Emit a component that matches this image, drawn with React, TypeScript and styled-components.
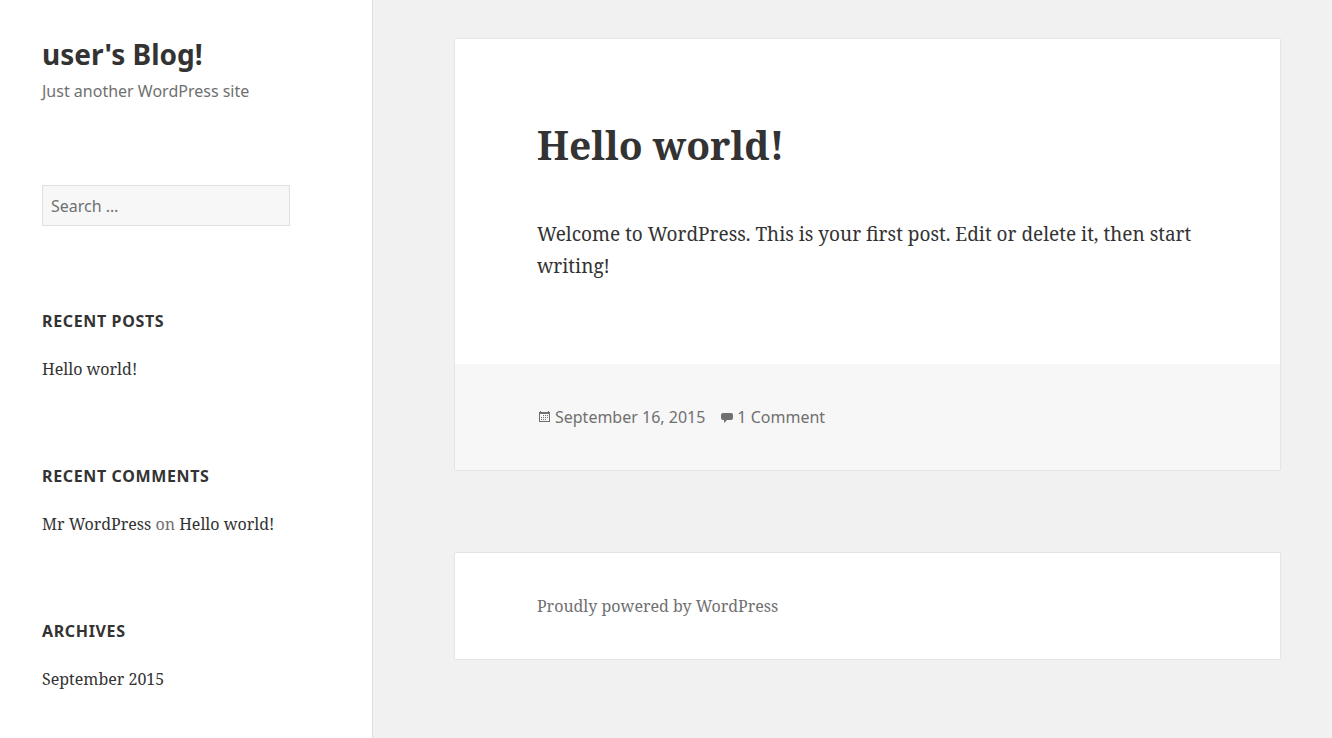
import React from 'react';
import styled, { createGlobalStyle } from 'styled-components';

const sans = '"Noto Sans", sans-serif';
const serif = '"Noto Serif", "Droid Serif", "DejaVu Serif Condensed", "DejaVu Serif", serif';

const GlobalStyle = createGlobalStyle`
  *, *::before, *::after { box-sizing: border-box; }
  body {
    margin: 0;
    background: #f1f1f1;
    color: #333;
    font: 16px/24px ${serif};
  }
  h1, h2, p, ul { margin: 0; padding: 0; }
  ul { list-style: none; }
  a { color: inherit; text-decoration: none; }
`;

const Page = styled.div`
  display: flex;
  min-height: 100vh;
`;

const Sidebar = styled.aside`
  flex: 0 0 28%;
  display: flex;
  flex-direction: column;
  gap: 82px;
  padding: 38px 82px 47px 42px;
  border-right: 1px solid #dedede;
  background: #fff;
`;

const SiteTitle = styled.h1`
  font: bold 28px/32px ${sans};
  white-space: nowrap;
`;

const Tagline = styled.p`
  margin-top: 9px;
  color: #707070;
  font: 16px/24px ${sans};
`;

const SearchField = styled.input`
  display: block;
  width: 100%;
  height: 41px;
  padding: 0 8px;
  border: 1px solid #e0e0e0;
  border-radius: 0;
  background: #f7f7f7;
  color: #707070;
  font: 16px/24px ${sans};
  appearance: none;
  &::placeholder { color: #707070; opacity: 1; }
`;

const Widgets = styled.div`
  display: flex;
  flex-direction: column;
  gap: 83px;
`;

const WidgetTitle = styled.h2`
  margin-bottom: 24px;
  font: bold 16px/24px ${sans};
  letter-spacing: 0.04em;
  text-transform: uppercase;
  white-space: nowrap;
`;

const WidgetItem = styled.li`
  color: #707070;
  white-space: nowrap;
  a { color: #333; }
`;

const Content = styled.div`
  flex: 1;
  min-width: 0;
  display: flex;
  flex-direction: column;
  gap: 83px;
  padding: 39px 52px 78px 82px;
`;

const Card = styled.div`
  background: #fff;
  box-shadow: 0 0 1px rgba(0, 0, 0, 0.3);
`;

const PostBody = styled.div`
  padding: 82px;
`;

const PostTitle = styled.h2`
  margin-bottom: 49px;
  font: bold 39px/48px ${serif};
`;

const PostText = styled.p`
  font: 19px/32px ${serif};
`;

const PostMeta = styled.footer`
  display: flex;
  flex-wrap: wrap;
  gap: 14px;
  padding: 41px 82px;
  background: #f7f7f7;
  color: #707070;
  font: 16px/24px ${sans};
`;

const MetaLink = styled.a`
  display: flex;
  align-items: center;
  gap: 2px;
`;

const Credits = styled.footer`
  padding: 41px 82px;
  color: #707070;
`;

const CalendarIcon = () => (
  <svg width="16" height="16" viewBox="0 0 16 16" fill="currentColor" shapeRendering="crispEdges" aria-hidden="true">
    <path fillRule="evenodd" d="M2 3h1V2h1v1h7V2h1v1h1v10H2zM3 5v7h9V5z" />
    <path d="M6 6h1v1H6zM8 6h1v1H8zM10 6h1v1h-1zM4 8h1v1H4zM6 8h1v1H6zM8 8h1v1H8zM10 8h1v1h-1zM4 10h1v1H4zM6 10h1v1H6zM8 10h1v1H8z" />
  </svg>
);

const CommentIcon = () => (
  <svg width="16" height="16" viewBox="0 0 16 16" fill="currentColor" aria-hidden="true">
    <path d="M4 4h8a2 2 0 0 1 2 2v3a2 2 0 0 1-2 2H8l-3 3v-3H4a2 2 0 0 1-2-2V6a2 2 0 0 1 2-2z" />
  </svg>
);

const Widget = ({ title, children }: { title: string; children: React.ReactNode }) => (
  <section>
    <WidgetTitle>{title}</WidgetTitle>
    <ul>
      <WidgetItem>{children}</WidgetItem>
    </ul>
  </section>
);

export default function App() {
  return (
    <>
      <GlobalStyle />
      <Page>
        <Sidebar>
          <header>
            <SiteTitle><a href="#home">user's Blog!</a></SiteTitle>
            <Tagline>Just another WordPress site</Tagline>
          </header>
          <Widgets>
            <form role="search">
              <SearchField type="search" aria-label="Search for:" placeholder="Search …" />
            </form>
            <Widget title="Recent Posts"><a href="#post">Hello world!</a></Widget>
            <Widget title="Recent Comments">
              <a href="#author">Mr WordPress</a> on <a href="#post">Hello world!</a>
            </Widget>
            <Widget title="Archives"><a href="#archive">September 2015</a></Widget>
          </Widgets>
        </Sidebar>
        <Content>
          <Card as="article">
            <PostBody>
              <PostTitle><a href="#post">Hello world!</a></PostTitle>
              <PostText>
                Welcome to WordPress. This is your first post. Edit or delete it, then start writing!
              </PostText>
            </PostBody>
            <PostMeta>
              <MetaLink href="#post"><CalendarIcon />September 16, 2015</MetaLink>
              <MetaLink href="#comments"><CommentIcon />1 Comment</MetaLink>
            </PostMeta>
          </Card>
          <Card>
            <Credits><a href="#wordpress">Proudly powered by WordPress</a></Credits>
          </Card>
        </Content>
      </Page>
    </>
  );
}
